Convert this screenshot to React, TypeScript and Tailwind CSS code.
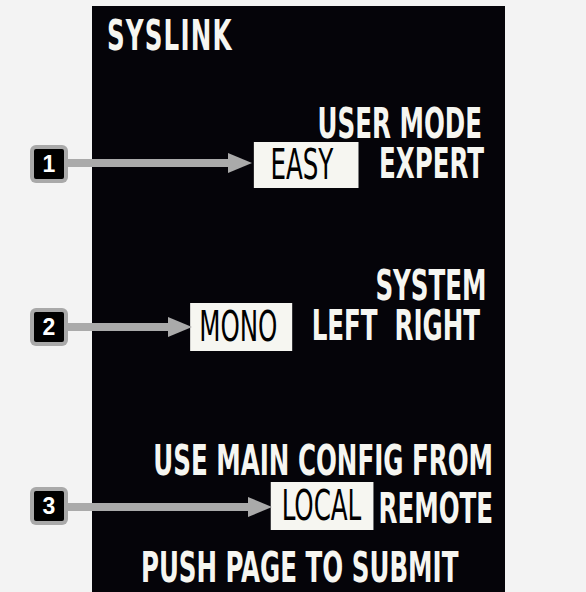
import React from "react";

const F = { fontFamily: '"DejaVu Sans Condensed", "DejaVu Sans", sans-serif' };

function Badge({ n, top }: { n: string; top: number }) {
  return (
    <div className="absolute left-[30px]" style={{ top }}>
      <div className="w-[38px] h-[38px] rounded-[6px] bg-[#a9a9a9] p-[4px]">
        <div
          className="w-full h-full rounded-[2px] bg-black flex items-center justify-center text-white font-bold text-[23px] leading-none"
          style={{ fontFamily: '"Liberation Sans", Arial, sans-serif' }}
        >
          {n}
        </div>
      </div>
    </div>
  );
}

function Arrow({ top, tip }: { top: number; tip: number }) {
  const x0 = 68;
  const w = tip - x0;
  return (
    <svg className="absolute" style={{ left: x0, top: top - 12 }} width={w} height={24} viewBox={`0 0 ${w} 24`}>
      <rect x={0} y={8} width={w - 22} height={8} fill="#aaaaaa" />
      <polygon points={`${w - 24},2 ${w},12 ${w - 24},22`} fill="#aaaaaa" />
    </svg>
  );
}

export default function App() {
  const boldTxt = "font-bold text-[#f6f6f1] text-[42px] leading-[48px] h-[48px] whitespace-nowrap";
  const box = "bg-[#f6f6f1] text-black text-[42px] font-normal whitespace-nowrap";
  return (
    <div className="relative w-[586px] h-[592px] bg-[#f3f3f3] overflow-hidden font-stretch-condensed" style={F}>
      <div className="ml-[92px] mt-[6px] w-[413px] h-[586px] bg-[#050409]">
        <div className="w-[635px] origin-left scale-x-[0.65] flex flex-col pt-[6px]">
          <div className={`${boldTxt} pl-[23px] tracking-[1.8px]`}>SYSLINK</div>
          <div className={`${boldTxt} text-right pr-[35px] mt-[40px]`}>USER MODE</div>
          <div className="flex justify-end items-start pr-[32px] gap-[32px] mt-[-8px]">
            <div className={`${box} w-[161px] h-[46px] leading-[46px] pl-[26px] mt-[2px]`}>EASY</div>
            <div className={boldTxt}>EXPERT</div>
          </div>
          <div className={`${boldTxt} text-right pr-[28px] mt-[74px]`}>SYSTEM</div>
          <div className="flex justify-end items-start pr-[38px] mt-[-8px]">
            <div className={`${box} w-[157px] h-[48px] leading-[48px] pl-[14px] mt-[1px]`}>MONO</div>
            <div className={`${boldTxt} ml-[30px]`}>LEFT</div>
            <div className={`${boldTxt} ml-[26px]`}>RIGHT</div>
          </div>
          <div className={`${boldTxt} text-right pr-[18px] mt-[86px]`}>USE MAIN CONFIG FROM</div>
          <div className="flex justify-end items-start pr-[18px] gap-[8px] mt-[-3px]">
            <div className={`${box} w-[158px] h-[48px] leading-[48px] pl-[17px]`}>LOCAL</div>
            <div className={`${boldTxt} mt-[3px]`}>REMOTE</div>
          </div>
          <div className={`${boldTxt} text-center mt-[11px] pl-[4px]`}>PUSH PAGE TO SUBMIT</div>
        </div>
      </div>
      <Badge n="1" top={145} />
      <Arrow top={163} tip={252} />
      <Badge n="2" top={308} />
      <Arrow top={327} tip={192} />
      <Badge n="3" top={487} />
      <Arrow top={507} tip={272} />
    </div>
  );
}
